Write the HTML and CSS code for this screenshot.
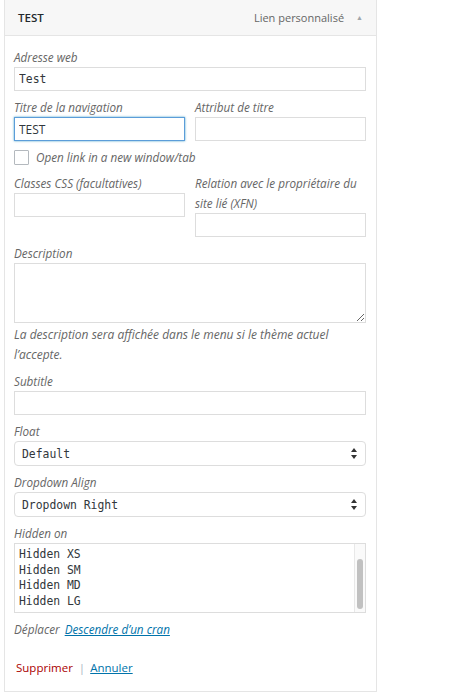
FILE: index.html
```html
<!DOCTYPE html>
<html lang="fr">
<head>
    <meta charset="UTF-8">
    <meta name="viewport" content="width=device-width, initial-scale=1.0">
    <title>Menu item</title>
    <link rel="stylesheet" href="styles.css">
</head>
<body>

<div class="menu-item">
    <div class="item-bar">
        <span class="item-title">TEST</span>
        <span class="item-type">Lien personnalisé</span>
        <span class="item-toggle">&#9650;</span>
    </div>

    <div class="item-settings">
        <div class="field">
            <label for="url">Adresse web</label>
            <input type="text" id="url" class="mono" value="Test">
        </div>

        <div class="field row">
            <div>
                <label for="nav-title">Titre de la navigation</label>
                <input type="text" id="nav-title" class="focused" value="TEST">
            </div>
            <div>
                <label for="attr-title">Attribut de titre</label>
                <input type="text" id="attr-title">
            </div>
        </div>

        <div class="field check">
            <span class="box"></span>
            <span class="check-label">Open link in a new window/tab</span>
        </div>

        <div class="field row">
            <div>
                <label for="css-classes">Classes CSS (facultatives)</label>
                <input type="text" id="css-classes">
            </div>
            <div>
                <label for="xfn">Relation avec le propriétaire du site lié (XFN)</label>
                <input type="text" id="xfn">
            </div>
        </div>

        <div class="field">
            <label for="desc">Description</label>
            <textarea id="desc"></textarea>
            <p class="help">La description sera affichée dans le menu si le thème actuel l’accepte.</p>
        </div>

        <div class="field">
            <label for="subtitle">Subtitle</label>
            <input type="text" id="subtitle">
        </div>

        <div class="field">
            <label>Float</label>
            <div class="select">
                <span>Default</span>
                <svg class="arrows" width="6" height="11" viewBox="0 0 6 11"><path d="M3 0L6 4H0Z M0 7H6L3 11Z" fill="#333"/></svg>
            </div>
        </div>

        <div class="field">
            <label>Dropdown Align</label>
            <div class="select">
                <span>Dropdown Right</span>
                <svg class="arrows" width="6" height="11" viewBox="0 0 6 11"><path d="M3 0L6 4H0Z M0 7H6L3 11Z" fill="#333"/></svg>
            </div>
        </div>

        <div class="field">
            <label>Hidden on</label>
            <div class="multi">
                <ul class="options">
                    <li>Hidden XS</li>
                    <li>Hidden SM</li>
                    <li>Hidden MD</li>
                    <li>Hidden LG</li>
                </ul>
                <div class="scroll-track"><div class="scroll-thumb"></div></div>
            </div>
        </div>

        <div class="field move">
            <span class="move-label">Déplacer</span>
            <a href="#">Descendre d’un cran</a>
        </div>

        <div class="actions">
            <a href="#" class="delete">Supprimer</a>
            <span class="sep">|</span>
            <a href="#" class="cancel">Annuler</a>
        </div>
    </div>
</div>

</body>
</html>
```

FILE: styles.css
```css
* {
    margin: 0;
    padding: 0;
    box-sizing: border-box;
}

body {
    background: #fff;
    font-family: "Open Sans", sans-serif;
    color: #444;
}

.menu-item {
    width: 373px;
    margin-left: 4px;
    border: 1px solid #e5e5e5;
    border-top: none;
}

.item-bar {
    height: 36px;
    display: flex;
    align-items: center;
    padding: 0 13px 0 13px;
    background: #f7f7f7;
    border-bottom: 1px solid #e5e5e5;
}

.item-title {
    flex: 1;
    font-size: 11.5px;
    font-weight: 600;
    color: #23282d;
}

.item-type {
    font-size: 11px;
    color: #666;
}

.item-toggle {
    margin-left: 12px;
    font-size: 7px;
    color: #a0a5aa;
}

.item-settings {
    padding: 11px 10px 13px 9px;
}

.field {
    margin-bottom: 6px;
}

.field label,
.help,
.check-label,
.move-label {
    display: block;
    font-size: 11.7px;
    font-style: italic;
    line-height: 20px;
    color: #666;
}

input[type="text"] {
    display: block;
    width: 100%;
    height: 24px;
    padding: 0 4px;
    border: 1px solid #ddd;
    background: #fff;
    font-family: "Open Sans", sans-serif;
    font-size: 12px;
    color: #32373c;
    outline: none;
}

.mono {
    font-family: "DejaVu Sans Mono", monospace !important;
    font-size: 11.4px !important;
}

input.focused {
    border-color: #5b9dd9;
    box-shadow: 0 0 2px rgba(30, 140, 190, 0.8);
}

.row {
    display: grid;
    grid-template-columns: 1fr 1fr;
    column-gap: 10px;
}

.check {
    display: flex;
    align-items: center;
    height: 20px;
}

.box {
    width: 15px;
    height: 15px;
    border: 1px solid #b4b9be;
    border-radius: 1px;
    background: #fff;
    margin-right: 7px;
}

textarea {
    display: block;
    width: 100%;
    height: 60px;
    border: 1px solid #ddd;
    resize: vertical;
}

.help {
    margin-top: 2px;
    font-size: 12px;
}

.select {
    position: relative;
    height: 25px;
    display: flex;
    align-items: center;
    padding-left: 7px;
    border: 1px solid #ddd;
    border-radius: 4px;
    font-family: "DejaVu Sans Mono", monospace;
    font-size: 11.4px;
    color: #32373c;
}

.arrows {
    position: absolute;
    right: 8px;
    top: 6px;
}

.multi {
    display: flex;
    height: 70px;
    border: 1px solid #ddd;
}

.options {
    flex: 1;
    list-style: none;
    padding: 3px 4px;
    font-family: "DejaVu Sans Mono", monospace;
    font-size: 11.4px;
    line-height: 15.7px;
    color: #32373c;
}

.scroll-track {
    width: 11px;
    padding: 15px 2px 3px 2px;
    background: #fafafa;
    border-left: 1px solid #e8e8e8;
}

.scroll-thumb {
    height: 100%;
    background: #c1c1c1;
    border-radius: 3px;
}

.move {
    display: flex;
    align-items: baseline;
    gap: 5px;
}

.move a {
    font-size: 11.7px;
    font-style: italic;
    color: #0073aa;
}

.actions {
    margin-top: 19px;
    font-size: 11.5px;
    line-height: 20px;
    padding-left: 2px;
}

.delete {
    color: #a00;
    text-decoration: none;
}

.sep {
    color: #a7b6c2;
    margin: 0 1px 0 3px;
}

.cancel {
    color: #0073aa;
    padding: 0 1px;
}
```
